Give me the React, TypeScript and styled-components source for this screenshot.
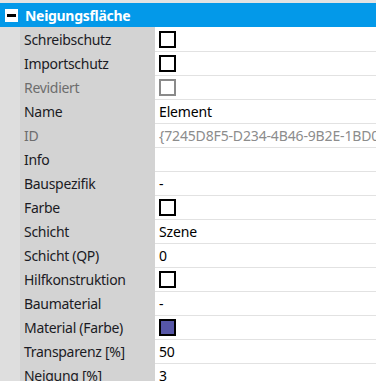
import { Fragment } from "react";
import styled, { createGlobalStyle } from "styled-components";

const GlobalStyle = createGlobalStyle`
  html, body {
    margin: 0;
    padding: 0;
    overflow: hidden;
    background: #e3e3e3;
  }
  body {
    font-family: "Noto Sans", "Open Sans", sans-serif;
  }
`;

const Panel = styled.div`
  width: 376px;
  height: 381px;
  overflow: hidden;
  padding-top: 3px;
  box-sizing: border-box;
  background: #e3e3e3;
`;

const Header = styled.div`
  height: 24px;
  display: flex;
  align-items: center;
  gap: 7px;
  padding-left: 5px;
  background: #0399e9;
  color: #ffffff;
  font-size: 14px;
  font-weight: 700;
  letter-spacing: -0.3px;
  white-space: nowrap;
`;

const Toggle = styled.span`
  width: 13px;
  height: 13px;
  background: #ffffff;
  display: flex;
  align-items: center;
  justify-content: center;
  &::after {
    content: "";
    width: 9px;
    height: 3px;
    background: #000000;
  }
`;

const Grid = styled.div`
  display: grid;
  grid-template-columns: 20px 135px 1fr;
  padding-top: 1px;
  background: linear-gradient(to right, #dedede 0 20px, #d3d3d3 20px 155px, #ffffff 155px);
`;

const Gutter = styled.div`
  background: #dedede;
`;

const Label = styled.div<{ $muted?: boolean }>`
  height: 24px;
  box-sizing: border-box;
  padding: 0 0 2px 4px;
  display: flex;
  align-items: center;
  background: #d3d3d3;
  color: ${(p) => (p.$muted ? "#6d6d6d" : "#1b1b24")};
  font-size: 14px;
  letter-spacing: -0.3px;
  white-space: nowrap;
  overflow: hidden;
`;

const Value = styled.div<{ $muted?: boolean }>`
  height: 24px;
  box-sizing: border-box;
  border-bottom: 1px solid #e2e2e2;
  padding: 0 0 1px 4px;
  display: flex;
  align-items: center;
  background: #ffffff;
  color: ${(p) => (p.$muted ? "#8c8c8c" : "#000000")};
  font-size: 14px;
  letter-spacing: -0.15px;
  white-space: nowrap;
  overflow: hidden;
`;

// checkbox / colour swatch in the value column
const Box = styled.span<{ $fill?: string; $muted?: boolean }>`
  width: 17px;
  height: 17px;
  box-sizing: border-box;
  border: 2px solid ${(p) => (p.$muted ? "#8a8a8a" : "#000000")};
  background: ${(p) => p.$fill || "#ffffff"};
`;

type Row = {
  label: string;
  text?: string;
  box?: boolean;
  fill?: string;
  muted?: boolean;
  mutedValue?: boolean;
};

const rows: Row[] = [
  { label: "Schreibschutz", box: true },
  { label: "Importschutz", box: true },
  { label: "Revidiert", box: true, muted: true },
  { label: "Name", text: "Element" },
  { label: "ID", text: "{7245D8F5-D234-4B46-9B2E-1BD0A3C5F27E}", muted: true, mutedValue: true },
  { label: "Info", text: "" },
  { label: "Bauspezifik", text: "-" },
  { label: "Farbe", box: true },
  { label: "Schicht", text: "Szene" },
  { label: "Schicht (QP)", text: "0" },
  { label: "Hilfkonstruktion", box: true },
  { label: "Baumaterial", text: "-" },
  { label: "Material (Farbe)", box: true, fill: "#5656a6" },
  { label: "Transparenz [%]", text: "50" },
  { label: "Neigung [%]", text: "3" },
];

function App() {
  return (
    <Panel>
      <GlobalStyle />
      <Header>
        <Toggle />
        Neigungsfläche
      </Header>
      <Grid>
        {rows.map((row) => (
          <Fragment key={row.label}>
            <Gutter />
            <Label $muted={row.muted}>{row.label}</Label>
            <Value $muted={row.mutedValue}>
              {row.box ? <Box $fill={row.fill} $muted={row.muted} /> : row.text}
            </Value>
          </Fragment>
        ))}
      </Grid>
    </Panel>
  );
}

export default App;
